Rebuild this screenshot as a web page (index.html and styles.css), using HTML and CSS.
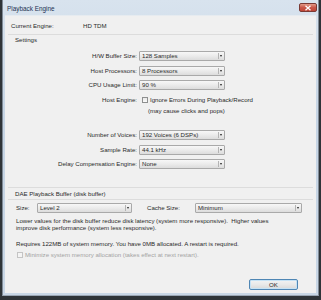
FILE: index.html
```html
<!DOCTYPE html>
<html>
<head>
<meta charset="utf-8">
<link rel="stylesheet" href="styles.css">
</head>
<body>
<div class="window">
  <div class="titlebar">
    <span class="title">Playback Engine</span>
    <span class="close"><svg width="8" height="6" viewBox="0 0 8 6"><path d="M1.5 0.8 L6.5 5.2 M6.5 0.8 L1.5 5.2" stroke="#fff" stroke-width="1.3" fill="none"/></svg></span>
  </div>
  <div class="content">
    <div class="engine"><span class="engine-key">Current Engine:</span><span class="engine-val">HD TDM</span></div>
    <div class="section-head">Settings</div>
    <div class="settings">
      <div class="row"><span class="lbl">H/W Buffer Size:</span><div class="select"><span class="sel-text">128 Samples</span><span class="arrow"></span></div></div>
      <div class="row"><span class="lbl">Host Processors:</span><div class="select"><span class="sel-text">8 Processors</span><span class="arrow"></span></div></div>
      <div class="row"><span class="lbl">CPU Usage Limit:</span><div class="select"><span class="sel-text">90 %</span><span class="arrow"></span></div></div>
      <div class="row"><span class="lbl">Host Engine:</span><div class="check-line"><span class="box"></span><span>Ignore Errors During Playback/Record</span></div></div>
      <div class="row row-note"><span></span><span class="note">(may cause clicks and pops)</span></div>
      <div class="row row-gap"><span class="lbl">Number of Voices:</span><div class="select"><span class="sel-text">192 Voices (6 DSPs)</span><span class="arrow"></span></div></div>
      <div class="row"><span class="lbl">Sample Rate:</span><div class="select"><span class="sel-text">44.1 kHz</span><span class="arrow"></span></div></div>
      <div class="row"><span class="lbl">Delay Compensation Engine:</span><div class="select"><span class="sel-text">None</span><span class="arrow"></span></div></div>
    </div>
    <div class="section-head dae-head">DAE Playback Buffer (disk buffer)</div>
    <div class="dae-row">
      <span class="size-lbl">Size:</span>
      <div class="select size-sel"><span class="sel-text">Level 2</span><span class="arrow"></span></div>
      <span class="cache-lbl">Cache Size:</span>
      <div class="select cache-sel"><span class="sel-text">Minimum</span><span class="arrow"></span></div>
    </div>
    <p class="desc">Lower values for the disk buffer reduce disk latency (system more responsive).&nbsp; Higher values<br>improve disk performance (system less responsive).</p>
    <p class="req">Requires 122MB of system memory. You have 0MB allocated. A restart is required.</p>
    <div class="disabled-line"><span class="box box-disabled"></span><span>Minimize system memory allocation (takes effect at next restart).</span></div>
    <div class="buttons"><span class="ok">OK</span></div>
  </div>
</div>
</body>
</html>
```

FILE: styles.css
```css
html, body {
  margin: 0;
  padding: 0;
}
body {
  width: 321px;
  height: 300px;
  overflow: hidden;
  background: #2f3438;
  font-family: "Liberation Sans", Arial, sans-serif;
  font-size: 6.1px;
  color: #2a2a2a;
}
.window {
  margin-left: 2px;
  width: 317px;
  height: 296px;
  box-sizing: border-box;
  background: linear-gradient(#d8e3ee, #c6d5e5 40%, #c9d7e6);
  display: flex;
  flex-direction: column;
  border-left: 1px solid #7f8a96;
  border-right: 1px solid #7f8a96;
  border-bottom: 1px solid #9aa6b4;
}
.titlebar {
  height: 15px;
  display: flex;
  align-items: flex-start;
  padding-left: 4px;
  padding-right: 1px;
}
.title {
  font-size: 6.4px;
  line-height: 8px;
  margin-top: 5px;
  color: #1c3251;
}
.close {
  margin-left: auto;
  margin-top: 3px;
  width: 18px;
  height: 9px;
  box-sizing: border-box;
  border: 1px solid #7a3a34;
  border-radius: 2px;
  background: linear-gradient(#e39a88, #c9584a 50%, #bf4536);
  display: flex;
  align-items: center;
  justify-content: center;
}
.close svg { display: block; }
.content {
  flex: 1;
  margin: 0 2px 2px 2px;
  background: #f0f0f0;
  padding-top: 6px;
  border-top: 1px solid #e6ebf0;
  display: flex;
  flex-direction: column;
}
.engine {
  display: flex;
  line-height: 8px;
  padding-left: 6px;
}
.engine-key { width: 72px; }
.section-head {
  margin: 4px 3px 0 3px;
  border-top: 1px solid #dcdcdc;
  padding: 1px 0 0 7px;
  line-height: 8px;
}
.settings {
  display: flex;
  flex-direction: column;
  margin-top: 5px;
}
.row {
  display: grid;
  grid-template-columns: 132px 86px;
  column-gap: 2px;
  align-items: center;
  height: 14.5px;
}
.row-note { height: 8px; }
.row-gap { margin-top: 13px; }
.lbl {
  text-align: right;
  line-height: 8px;
  white-space: nowrap;
}
.select {
  height: 10px;
  box-sizing: border-box;
  border: 1px solid #a9a9a9;
  border-radius: 1px;
  background: linear-gradient(#f7f7f7, #ebebeb 50%, #dcdcdc);
  display: flex;
  align-items: center;
}
.sel-text {
  flex: 1;
  padding-left: 2px;
  line-height: 8px;
  white-space: nowrap;
  overflow: hidden;
}
.arrow {
  width: 5px;
  height: 6px;
  border-left: 1px solid #b4b4b4;
  position: relative;
}
.arrow::after {
  content: "";
  position: absolute;
  left: 1px;
  top: 2px;
  border-left: 1.5px solid transparent;
  border-right: 1.5px solid transparent;
  border-top: 2px solid #222;
}
.check-line {
  display: flex;
  align-items: center;
  padding-left: 3px;
  line-height: 8px;
  white-space: nowrap;
}
.box {
  width: 6px;
  height: 6px;
  box-sizing: border-box;
  border: 1px solid #8e8f8f;
  background: linear-gradient(#e8e8e8, #fbfbfb);
  margin-right: 2px;
  flex: none;
}
.note {
  padding-left: 9px;
  line-height: 8px;
  white-space: nowrap;
}
.dae-head {
  margin-top: 15px;
  border-bottom: 1px solid #dcdcdc;
  padding-top: 2px;
  padding-bottom: 1px;
}
.dae-row {
  display: flex;
  align-items: center;
  margin-top: 3px;
  height: 10px;
  line-height: 8px;
}
.size-lbl { width: 21px; padding-left: 11px; }
.size-sel { width: 95px; }
.cache-lbl { width: 48px; padding-left: 15px; }
.cache-sel { width: 107px; }
.desc {
  margin: 4px 0 0 11px;
  line-height: 7px;
  white-space: nowrap;
}
.req {
  margin: 9px 0 0 11px;
  line-height: 8px;
  white-space: nowrap;
}
.disabled-line {
  margin: 3px 0 0 12px;
  display: flex;
  align-items: center;
  line-height: 8px;
  color: #a3a3a3;
  white-space: nowrap;
}
.box-disabled {
  border-color: #c4c4c4;
  background: #f4f4f4;
}
.buttons {
  display: flex;
  justify-content: flex-end;
  margin-top: 20px;
  padding-right: 18px;
}
.ok {
  width: 49px;
  height: 11px;
  box-sizing: border-box;
  border: 1px solid #4f86b4;
  border-radius: 2px;
  background: linear-gradient(#f3f3f3, #e9e9e9 50%, #d9d9d9);
  box-shadow: inset 0 0 0 1px #c6e2f5;
  text-align: center;
  line-height: 9px;
}
```
